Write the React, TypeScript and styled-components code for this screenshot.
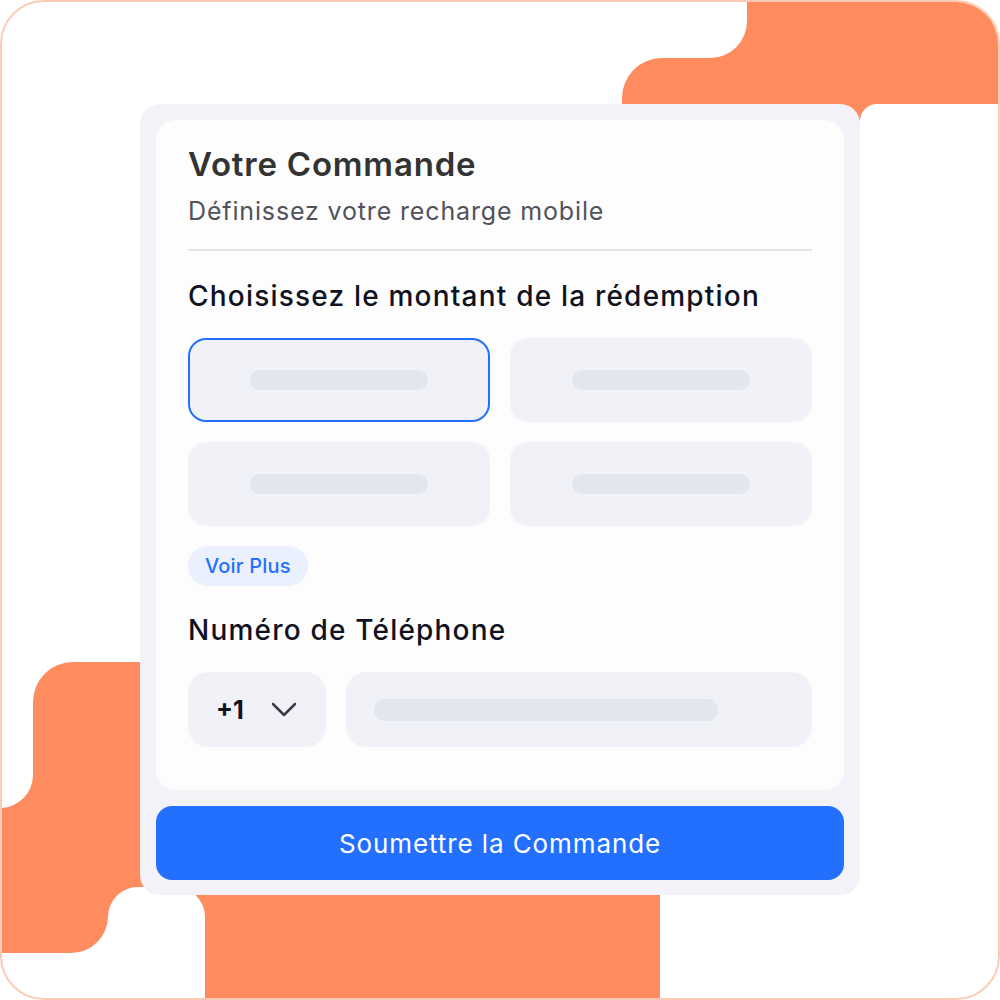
import React from "react";
import styled, { createGlobalStyle } from "styled-components";

const Global = createGlobalStyle`
  html, body { margin: 0; padding: 0; background: #ffffff; }
  body { font-family: Inter, "Noto Sans", sans-serif; }
  * { box-sizing: border-box; }
`;

const Frame = styled.div`
  position: relative;
  width: 1000px;
  height: 1000px;
  border: 2px solid #fdcab4;
  border-radius: 44px;
  overflow: hidden;
  background: #ffffff;
  padding: 102px 0 0 138px;
`;

const Decor = styled.svg`
  position: absolute;
  top: -2px;
  left: -2px;
  width: 1000px;
  height: 1000px;
`;

const Card = styled.div`
  position: relative;
  width: 720px;
  height: 791px;
  background: #f2f2f8;
  border-radius: 20px;
  padding: 16px 16px 15px 16px;
  display: flex;
  flex-direction: column;
  gap: 16px;
`;

const Panel = styled.div`
  background: #fdfdfe;
  border-radius: 20px;
  height: 670px;
  flex-shrink: 0;
  padding: 24px 32px 0 32px;
  display: flex;
  flex-direction: column;
`;

const Title = styled.h1`
  margin: 0;
  font-size: 33px;
  line-height: 40px;
  font-weight: 600;
  color: #333333;
  letter-spacing: 0.8px;
`;

const Subtitle = styled.p`
  margin: 12px 0 0 0;
  font-size: 25px;
  line-height: 30px;
  font-weight: 400;
  color: #52525b;
  letter-spacing: 0.85px;
`;

const Divider = styled.hr`
  margin: 23px 0 0 0;
  border: none;
  height: 2px;
  background: #e3e3e8;
`;

const SectionTitle = styled.h2<{ $mt: number }>`
  margin: ${(p) => p.$mt}px 0 0 0;
  font-size: 28px;
  line-height: 32px;
  font-weight: 500;
  color: #10121f;
  letter-spacing: 1.2px;
`;

const AmountGrid = styled.div`
  margin-top: 26px;
  display: grid;
  grid-template-columns: 302px 302px;
  grid-template-rows: 84px 84px;
  column-gap: 20px;
  row-gap: 20px;
`;

const AmountTile = styled.div<{ $selected?: boolean }>`
  background: #f1f2f8;
  border-radius: 18px;
  border: 2px solid ${(p) => (p.$selected ? "#2370ff" : "transparent")};
  display: flex;
  align-items: center;
  justify-content: center;
`;

const Skeleton = styled.div<{ $w: number; $h: number }>`
  width: ${(p) => p.$w}px;
  height: ${(p) => p.$h}px;
  border-radius: ${(p) => p.$h / 2}px;
  background: #e3e5ef;
`;

const MoreButton = styled.button`
  margin-top: 20px;
  align-self: flex-start;
  height: 40px;
  padding: 0 17px;
  border: none;
  border-radius: 20px;
  background: #eaf0fd;
  color: #2370ff;
  font-family: inherit;
  font-size: 20px;
  font-weight: 500;
  letter-spacing: 0.2px;
`;

const PhoneRow = styled.div`
  margin-top: 26px;
  display: flex;
  gap: 20px;
  height: 75px;
`;

const CountrySelect = styled.div`
  width: 138px;
  background: #f1f2f8;
  border-radius: 20px;
  display: flex;
  align-items: center;
  padding-left: 28px;
  gap: 27px;
  color: #10121f;
  font-size: 25px;
  font-weight: 700;
`;

const Chevron = styled.svg`
  width: 26px;
  height: 16px;
  flex-shrink: 0;
`;

const PhoneInput = styled.div`
  flex: 1;
  background: #f1f2f8;
  border-radius: 20px;
  display: flex;
  align-items: center;
  padding-left: 28px;
`;

const SubmitButton = styled.button`
  height: 74px;
  flex-shrink: 0;
  border: none;
  border-radius: 16px;
  background: #2370ff;
  color: #ffffff;
  font-family: inherit;
  font-size: 26px;
  font-weight: 400;
  letter-spacing: 0.9px;
`;

export default function App() {
  return (
    <>
      <Global />
      <Frame>
        <Decor viewBox="0 0 1000 1000">
          <path
            fill="#ff8c5e"
            d="M622,104 L622,98 A40,40 0 0 1 662,58 L710,58 A37,37 0 0 0 747,21 L747,0 L1000,0 L1000,104 Z"
          />
          <path fill="#ff8c5e" d="M820,100 L877,100 L877,104 A17,17 0 0 0 860,121 L820,121 Z" />
          <path
            fill="#ff8c5e"
            d="M0,808 A33,33 0 0 0 33,775 L33,702 A40,40 0 0 1 73,662 L660,662 L660,1000 L205,1000 L205,917 A30,30 0 0 0 175,887 L138,887 A30,30 0 0 0 108,917 L108,916 A37,37 0 0 1 71,953 L0,953 Z"
          />
        </Decor>
        <Card>
          <Panel>
            <Title>Votre Commande</Title>
            <Subtitle>Définissez votre recharge mobile</Subtitle>
            <Divider />
            <SectionTitle $mt={29}>Choisissez le montant de la rédemption</SectionTitle>
            <AmountGrid>
              <AmountTile $selected>
                <Skeleton $w={178} $h={20} />
              </AmountTile>
              <AmountTile>
                <Skeleton $w={178} $h={20} />
              </AmountTile>
              <AmountTile>
                <Skeleton $w={178} $h={20} />
              </AmountTile>
              <AmountTile>
                <Skeleton $w={178} $h={20} />
              </AmountTile>
            </AmountGrid>
            <MoreButton>Voir Plus</MoreButton>
            <SectionTitle $mt={28}>Numéro de Téléphone</SectionTitle>
            <PhoneRow>
              <CountrySelect>
                <span>+1</span>
                <Chevron viewBox="0 0 26 16">
                  <polyline
                    points="2,2 13,13 24,2"
                    fill="none"
                    stroke="#3a3a44"
                    strokeWidth={2.5}
                    strokeLinecap="round"
                    strokeLinejoin="round"
                  />
                </Chevron>
              </CountrySelect>
              <PhoneInput>
                <Skeleton $w={344} $h={22} />
              </PhoneInput>
            </PhoneRow>
          </Panel>
          <SubmitButton>Soumettre la Commande</SubmitButton>
        </Card>
      </Frame>
    </>
  );
}
